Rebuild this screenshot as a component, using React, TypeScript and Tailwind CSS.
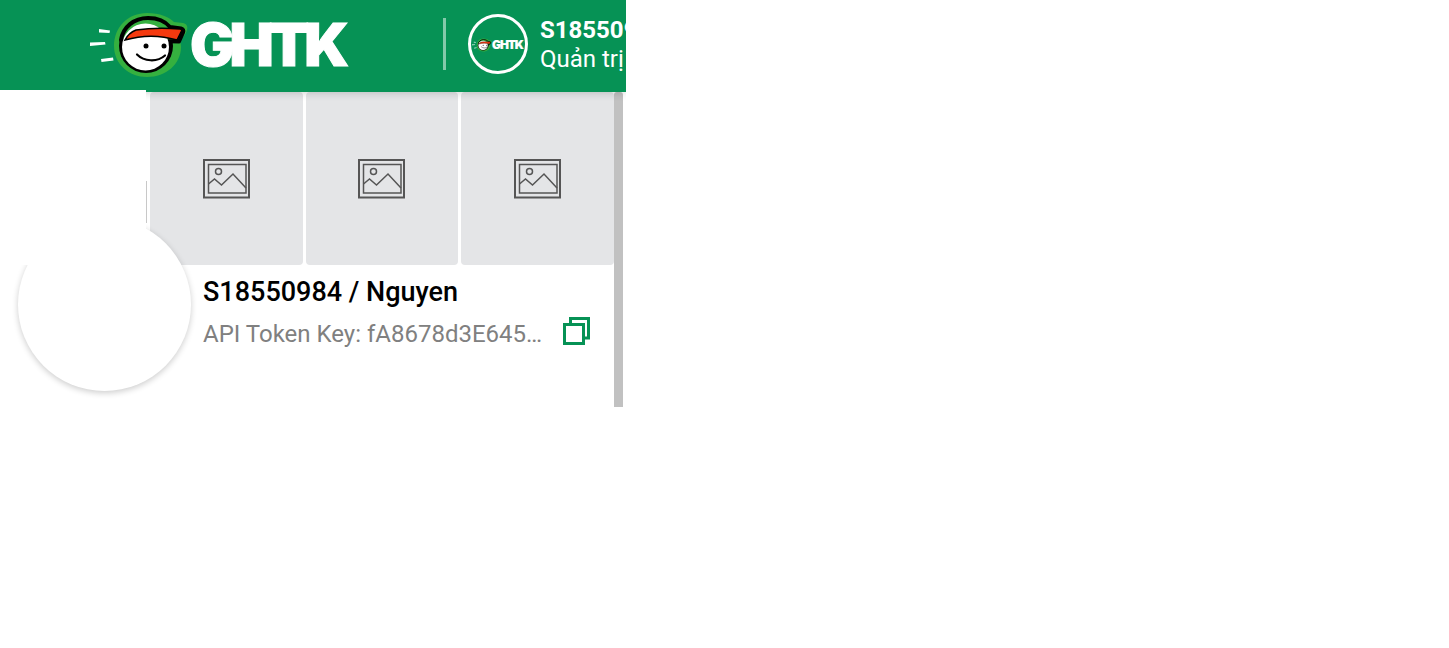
function Logo({ className, mt }: { className: string; mt?: string }) {
  return (
    <svg viewBox="85 5 270 75" className={`${className} ${mt ?? ""}`}>
      <path d="M99 29l11 1.500-.5 2.500-10.500-.5zM90 42.500l15-.5 .5 2.500-15.500 1.500zM101 59l12-1.500.5 3-12 1.500z" fill="#fff" />
      <path d="M114 46c0-19 14-33 33-33 13 0 22 4 27 9l9 1c4 1 5 4 4 7-1 4-4 8-8 10 1 1 2 4 2 7 0 17-15 30-34 30-18 0-33-13-33-31z" fill="#35b03f" />
      <circle cx="146" cy="46" r="27" fill="#000" />
      <path d="M121 40c2-13 13-22 27-22 9 0 17 3 22 9l11 1.500c2 .5 3 2 2 4l-4 9z" fill="#35b03f" stroke="#000" strokeWidth="4" strokeLinejoin="round" />
      <circle cx="145.500" cy="47" r="23.500" fill="#fff" />
      <path d="M125 40c2-4 6-8 11-10 14-2 30-2 44-1 1 0 2 1 1.500 2l-4.500 9c-17-5-35-5-52 0z" fill="#f5390f" stroke="#000" strokeWidth="1.500" />
      <circle cx="146" cy="46" r="2.500" fill="#000" />
      <circle cx="164" cy="46" r="2.500" fill="#000" />
      <path d="M137 54.500c7 7 20 8 28 1" fill="none" stroke="#000" strokeWidth="2.200" strokeLinecap="round" />
      <text x="190" y="66" fill="#fff" stroke="#fff" strokeWidth="1" fontFamily="Inter, sans-serif" fontWeight="900" fontSize="59" letterSpacing="-5">GHTK</text>
    </svg>
  );
}

function ImageIcon() {
  return (
    <svg width="47" height="40" viewBox="0 0 47 40" fill="none" stroke="#555" className="-ml-[1px]">
      <rect x="1" y="1" width="45" height="37.500" strokeWidth="2" />
      <rect x="5.500" y="5.500" width="37.500" height="28.500" strokeWidth="1.500" />
      <circle cx="15.500" cy="12.500" r="3" strokeWidth="1.500" />
      <path d="M5.500 25l6-5 7 6 11.500-11 13 14" strokeWidth="1.500" />
    </svg>
  );
}

function Card({ width }: { width: string }) {
  return (
    <div className={`${width} h-full bg-[#e4e5e7] rounded-[4px] flex items-center justify-center`}>
      <ImageIcon />
    </div>
  );
}

export default function App() {
  return (
    <div className="relative w-[626px] h-[407px] bg-white overflow-hidden font-['Roboto',sans-serif]">
      <header className="relative z-10 h-[92px] bg-[#069255] flex items-center shadow-[0_1px_8px_rgba(0,0,0,0.18)] overflow-hidden whitespace-nowrap">
        <Logo className="ml-[85px] self-start w-[270px] h-[75px] shrink-0" mt="mt-[5px]" />
        <div className="ml-[88px] w-[3px] h-[52px] bg-white/50 shrink-0 -mt-[4px]" />
        <div className="ml-[22px] w-[60px] h-[60px] rounded-full border-[3px] border-white flex items-center justify-center shrink-0 -mt-[4px]">
          <Logo className="w-[54px] h-[15px] shrink-0" />
        </div>
        <div className="ml-[12px] text-white text-[24px] leading-[29px] -mt-[2px]">
          <div className="font-bold">S18550984 / Nguyen</div>
          <div>Quản trị viên</div>
        </div>
      </header>

      <div className="absolute left-0 top-[90px] z-30 w-[146px] h-[175px] bg-white" />
      <div className="absolute left-[146px] top-[181px] z-30 w-px h-[42px] bg-[#c8c8c8]" />
      <div className="absolute left-[18px] top-[218px] z-20 w-[173px] h-[173px] rounded-full bg-white shadow-[0_2px_6px_rgba(0,0,0,0.2)]" />

      <main className="flex h-[315px] w-[623px]">
        <div className="w-[614px] h-full">
          <div className="h-[173px] pl-[150px] flex gap-[3px]">
            <Card width="w-[153px]" />
            <Card width="w-[152px]" />
            <Card width="w-[153px]" />
          </div>
          <div className="pl-[203px] pr-[24px] pt-[9px]">
            <div className="text-[27px] leading-[36px] font-medium text-black whitespace-nowrap">S18550984 / Nguyen</div>
            <div className="flex items-center mt-[6px] h-[36px]">
              <div className="w-[339px] text-[24px] leading-[36px] text-[#808080] whitespace-nowrap">API Token Key: fA8678d3E645…</div>
              <svg width="27" height="28" viewBox="0 0 27 28" fill="none" stroke="#069255" strokeWidth="3" className="ml-[21px] -mt-[7px] shrink-0">
                <path d="M7.500 6.500V1.500h18V21H21" />
                <rect x="1.500" y="7.500" width="19" height="19" />
              </svg>
            </div>
          </div>
        </div>
        <div className="w-[9px] h-full bg-[#c1c1c1] rounded-t-[3px]" />
      </main>
    </div>
  );
}
